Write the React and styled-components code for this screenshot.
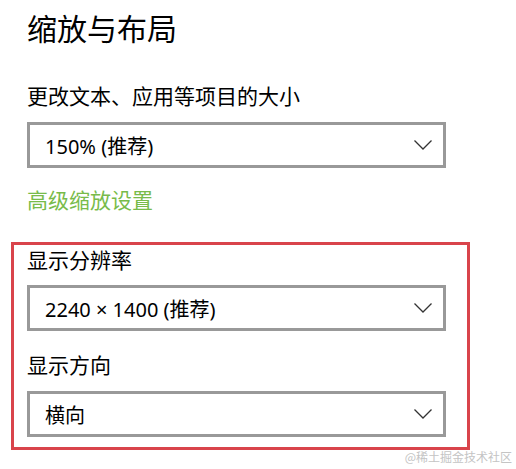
import styled, { createGlobalStyle } from "styled-components";

const GlobalStyle = createGlobalStyle`
  html, body {
    margin: 0;
    padding: 0;
    background: #ffffff;
  }
  body {
    font-family: "Noto Sans", "Noto Sans CJK SC", sans-serif;
    color: #000000;
  }
`;

const Page = styled.div`
  position: relative;
  width: 516px;
  height: 469px;
  box-sizing: border-box;
  padding: 9px 0 0 27px;
  display: flex;
  flex-direction: column;
  overflow: hidden;
`;

const Title = styled.h1`
  margin: 0;
  font-size: 30px;
  line-height: 40px;
  font-weight: 400;
`;

const Label = styled.div`
  font-size: 21px;
  line-height: 28px;
  margin-top: ${(p) => p.$top || 0}px;
`;

const Link = styled.a`
  display: block;
  font-size: 21px;
  line-height: 28px;
  color: #78bb4a;
  text-decoration: none;
  margin-top: 18px;
  width: fit-content;
`;

const Select = styled.div`
  width: 419px;
  height: 46px;
  box-sizing: border-box;
  border: 3px solid #999999;
  margin-top: ${(p) => p.$top || 0}px;
  display: flex;
  align-items: center;
  justify-content: space-between;
  padding: 0 11px 0 15px;
  font-size: 20px;
`;

const Highlight = styled.section`
  margin: 28px 0 0 -16px;
  width: 459px;
  height: 208px;
  box-sizing: border-box;
  border: 3px solid #d9444b;
  padding: 1px 0 0 13px;
  display: flex;
  flex-direction: column;
`;

const Watermark = styled.div`
  position: absolute;
  right: 4px;
  bottom: 5px;
  font-size: 12px;
  line-height: 14px;
  color: #c4c4c4;
  font-family: "Noto Sans CJK SC", sans-serif;
`;

const Chevron = () => (
  <svg width="18" height="10" viewBox="0 0 18 10">
    <polyline points="0.5,0.5 9,9 17.5,0.5" fill="none" stroke="#333" strokeWidth="1.3" />
  </svg>
);

const Dropdown = ({ value, top }) => (
  <Select $top={top}>
    <span>{value}</span>
    <Chevron />
  </Select>
);

export default function App() {
  return (
    <>
      <GlobalStyle />
      <Page>
        <Title>缩放与布局</Title>
        <Label $top={33}>更改文本、应用等项目的大小</Label>
        <Dropdown value="150% (推荐)" top={12} />
        <Link href="#">高级缩放设置</Link>
        <Highlight>
          <Label>显示分辨率</Label>
          <Dropdown value="2240 × 1400 (推荐)" top={11} />
          <Label $top={20}>显示方向</Label>
          <Dropdown value="横向" top={12} />
        </Highlight>
        <Watermark>@稀土掘金技术社区</Watermark>
      </Page>
    </>
  );
}
